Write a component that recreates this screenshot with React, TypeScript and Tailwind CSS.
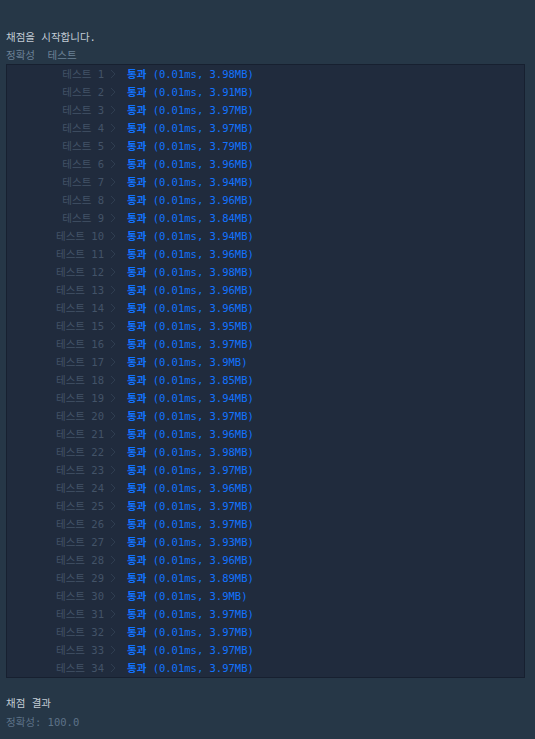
import React from 'react';

const results: string[] = [
  '3.98', '3.91', '3.97', '3.97', '3.79', '3.96', '3.94', '3.96', '3.84', '3.94',
  '3.96', '3.98', '3.96', '3.96', '3.95', '3.97', '3.9', '3.85', '3.94', '3.97',
  '3.96', '3.98', '3.97', '3.96', '3.97', '3.97', '3.93', '3.96', '3.89', '3.9',
  '3.97', '3.97', '3.97', '3.97',
];

const mono = { fontFamily: '"DejaVu Sans Mono", "Noto Sans CJK KR", monospace' };

function Chevron() {
  return (
    <svg width="6" height="10" viewBox="0 0 6 10" className="shrink-0">
      <polyline points="1,1 5,5 1,9" fill="none" stroke="#2f3d50" strokeWidth="1" />
    </svg>
  );
}

export default function App() {
  return (
    <div className="min-h-[739px] w-full bg-[#263747] px-[6px] pt-[28px] text-[10.5px]" style={mono}>
      <div className="h-[18px] leading-[18px] text-[#c3ccd5]">채점을 시작합니다.</div>
      <div className="h-[18px] leading-[18px] text-[#6c8196]">정확성&nbsp;&nbsp;테스트</div>

      <div className="mr-[4px] border border-[#172030] bg-[#202b3d]">
        {results.map((mb, i) => (
          <div key={i} className="flex h-[18px] items-center leading-[18px]">
            <div className="w-[97px] shrink-0 text-right text-[#435368]">테스트 {i + 1}</div>
            <div className="ml-[6px] flex items-center">
              <Chevron />
            </div>
            <div className="ml-[11px] text-[#1273ff]">
              <span className="font-bold">통과</span> (0.01ms, {mb}MB)
            </div>
          </div>
        ))}
      </div>

      <div className="mt-[16px] h-[18px] leading-[18px] text-[#c3ccd5]">채점 결과</div>
      <div className="mt-[1px] h-[18px] leading-[18px] text-[#5d7287]">정확성: 100.0</div>
    </div>
  );
}
